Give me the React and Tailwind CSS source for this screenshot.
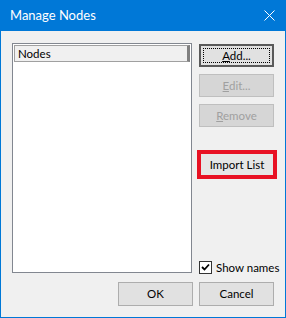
export default function App() {
  const font = { fontFamily: 'Lato, "Noto Sans", sans-serif' };
  return (
    <div className="w-[286px] h-[318px] flex flex-col bg-[#0078d7] text-[11.5px] text-black" style={font}>
      <div className="h-[31px] shrink-0 flex items-center justify-between pl-[10px] pr-[11px] text-white">
        <span className="text-[13px] leading-none">Manage Nodes</span>
        <svg width="11" height="11" viewBox="0 0 11 11">
          <path d="M0.5 0.5 L10.5 10.5 M10.5 0.5 L0.5 10.5" stroke="white" strokeWidth="1" />
        </svg>
      </div>
      <div className="flex-1 mx-[1px] mb-[1px] bg-[#f0f0f0] flex flex-col pt-[12px] px-[11px] pb-[11px]">
        <div className="flex h-[230px] gap-[7px]">
          <div className="shrink-0 w-[180px] h-full border border-[#828790] bg-white flex flex-col">
            <div className="h-[17px] mx-[1px] mt-[1px] border border-[#a0a0a0] border-r-[3px] border-r-[#808080] bg-[#f0f0f0] flex items-center pl-[3px] leading-none">
              Nodes
            </div>
          </div>
          <div className="w-[75px] shrink-0 flex flex-col">
            <button className="mt-[1px] h-[23px] w-[75px] border-2 border-[#5a5a5a] bg-[#e1e1e1] flex items-center justify-center p-[2px]">
              <span className="w-full h-full border border-dotted border-black flex items-center justify-center leading-none">
                <span><span className="underline">A</span>dd...</span>
              </span>
            </button>
            <button className="mt-[7px] h-[23px] w-[75px] border border-[#bfbfbf] bg-[#d6d6d6] text-[#a0a0a0] flex items-center justify-center leading-none">
              <span><span className="underline">E</span>dit...</span>
            </button>
            <button className="mt-[7px] h-[23px] w-[75px] border border-[#bfbfbf] bg-[#d6d6d6] text-[#a0a0a0] flex items-center justify-center leading-none">
              <span><span className="underline">R</span>emove</span>
            </button>
            <div className="mt-[23px] -ml-[2px] w-[80px] h-[29px] border-4 border-[#e81123] bg-[#e6e6e6] flex items-center justify-center leading-none">
              Import List
            </div>
            <div className="mt-auto flex items-center gap-[4px] mb-[-1px] whitespace-nowrap">
              <div className="shrink-0 w-[13px] h-[13px] border border-[#333333] bg-white flex items-center justify-center">
                <svg width="9" height="9" viewBox="0 0 9 9">
                  <path d="M1 4 L3.5 6.5 L8 1.5" stroke="black" strokeWidth="1.8" fill="none" />
                </svg>
              </div>
              <span className="leading-none">Show names</span>
            </div>
          </div>
        </div>
        <div className="mt-[9px] flex justify-end gap-[6px]">
          <button className="h-[24px] w-[75px] border border-[#adadad] bg-[#e1e1e1] flex items-center justify-center leading-none">OK</button>
          <button className="h-[24px] w-[75px] border border-[#adadad] bg-[#e1e1e1] flex items-center justify-center leading-none">Cancel</button>
        </div>
      </div>
    </div>
  );
}
